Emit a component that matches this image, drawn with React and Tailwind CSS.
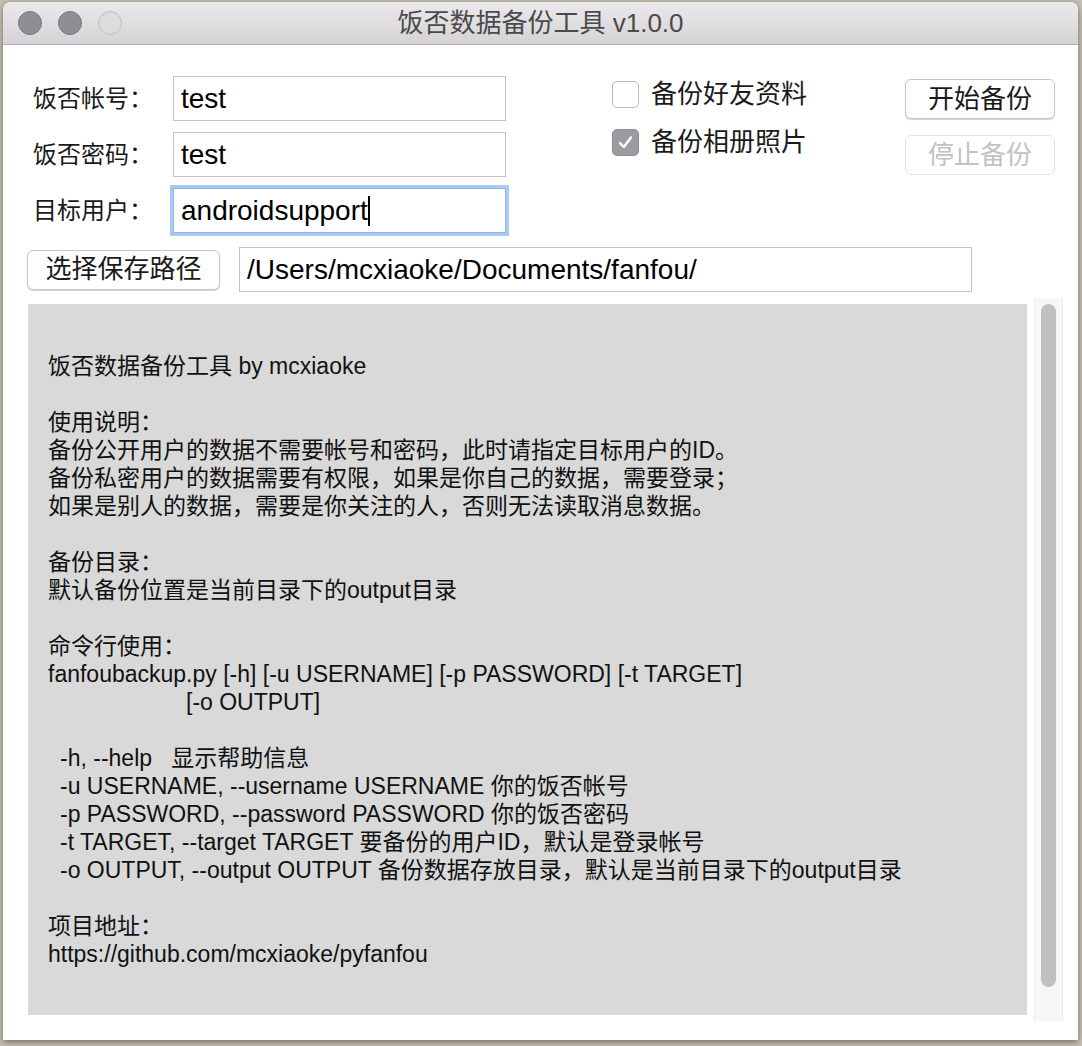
import React from 'react'

const font = { fontFamily: '"Liberation Sans", "Noto Sans CJK SC", sans-serif' }

const helpLines = [
  '饭否数据备份工具 by mcxiaoke',
  '',
  '使用说明：',
  '备份公开用户的数据不需要帐号和密码，此时请指定目标用户的ID。',
  '备份私密用户的数据需要有权限，如果是你自己的数据，需要登录；',
  '如果是别人的数据，需要是你关注的人，否则无法读取消息数据。',
  '',
  '备份目录：',
  '默认备份位置是当前目录下的output目录',
  '',
  '命令行使用：',
  'fanfoubackup.py [-h] [-u USERNAME] [-p PASSWORD] [-t TARGET]',
]

const optionLines = [
  '-h, --help   显示帮助信息',
  '-u USERNAME, --username USERNAME 你的饭否帐号',
  '-p PASSWORD, --password PASSWORD 你的饭否密码',
  '-t TARGET, --target TARGET 要备份的用户ID，默认是登录帐号',
  '-o OUTPUT, --output OUTPUT 备份数据存放目录，默认是当前目录下的output目录',
]

function Field({ label, value, focused }) {
  return (
    <div className="flex items-center h-[45px]">
      <div className="w-[140px] text-[24px] text-[#1a1a1a]">{label}</div>
      <div
        className={`w-[333px] h-[45px] flex items-center pl-[7px] bg-white text-[28px] text-black ${
          focused ? 'border border-[#8fb6e6] ring-[3px] ring-[#a9cbf3]' : 'border border-[#c4c4c4]'
        }`}
      >
        <span>{value}</span>
        {focused && <span className="w-[2px] h-[30px] bg-black" />}
      </div>
    </div>
  )
}

function Checkbox({ label, checked }) {
  return (
    <div className="flex items-center gap-[12px] h-[27px]">
      {checked ? (
        <div className="w-[27px] h-[27px] rounded-[5px] bg-[#9c9ba0] border border-[#8d8c91] flex items-center justify-center">
          <svg width="17" height="17" viewBox="0 0 17 17">
            <path d="M3 9.2 L6.8 13 L14 3.5" fill="none" stroke="white" strokeWidth="2.4" strokeLinecap="round" strokeLinejoin="round" />
          </svg>
        </div>
      ) : (
        <div className="w-[27px] h-[27px] rounded-[5px] bg-white border border-[#b9b9b9]" />
      )}
      <span className="text-[26px] text-[#1a1a1a]">{label}</span>
    </div>
  )
}

function MacButton({ children, disabled, className = '' }) {
  return (
    <div
      className={`h-[40px] rounded-[6px] bg-white flex items-center justify-center text-[26px] ${
        disabled
          ? 'border border-[#e2e2e2] text-[#c2c2c2]'
          : 'border border-[#c6c6c6] text-[#1a1a1a] shadow-[0_1px_1px_rgba(0,0,0,0.18)]'
      } ${className}`}
    >
      {children}
    </div>
  )
}

export default function App() {
  return (
    <div className="w-[1082px] h-[1046px] bg-[#c6c0b0] pt-[2px] pl-[3px] overflow-hidden" style={font}>
      <div className="w-[1075px] h-[1038px] bg-white rounded-t-[8px] flex flex-col shadow-[0_2px_6px_rgba(0,0,0,0.45)] overflow-hidden">
        {/* Title bar */}
        <div className="h-[43px] shrink-0 bg-gradient-to-b from-[#ebe9eb] to-[#d5d3d5] border-b border-[#b2b0b2] grid grid-cols-[200px_1fr_200px] items-center">
          <div className="flex items-center gap-[16px] pl-[15px]">
            <div className="w-[24px] h-[24px] rounded-full bg-[#8f8e93] border border-[#77767b]" />
            <div className="w-[24px] h-[24px] rounded-full bg-[#8f8e93] border border-[#77767b]" />
            <div className="w-[24px] h-[24px] rounded-full bg-[#dddcdd] border border-[#c0bfc0]" />
          </div>
          <div className="text-center text-[26px] text-[#4b4a4b]">饭否数据备份工具 v1.0.0</div>
          <div />
        </div>

        {/* Body */}
        <div className="flex-1 flex flex-col pl-[24px]">
          <div className="flex pt-[31px]">
            <div className="flex flex-col gap-[11px] pl-[6px]">
              <Field label="饭否帐号：" value="test" />
              <Field label="饭否密码：" value="test" />
              <Field label="目标用户：" value="androidsupport" focused />
            </div>
            <div className="flex flex-col gap-[21px] ml-[106px] pt-[5px]">
              <Checkbox label="备份好友资料" />
              <Checkbox label="备份相册照片" checked />
            </div>
            <div className="flex flex-col gap-[16px] ml-auto mr-[23px] pt-[3px]">
              <MacButton className="w-[150px]">开始备份</MacButton>
              <MacButton className="w-[150px]" disabled>停止备份</MacButton>
            </div>
          </div>

          <div className="flex items-center gap-[19px] mt-[14px]">
            <MacButton className="w-[193px]">选择保存路径</MacButton>
            <div className="w-[733px] h-[45px] border border-[#c4c4c4] bg-white flex items-center pl-[7px] text-[28px] text-black">
              /Users/mcxiaoke/Documents/fanfou/
            </div>
          </div>

          <div className="flex items-start gap-[7px] mt-[6px]">
            <div className="w-[999px] h-[711px] mt-[6px] ml-[1px] bg-[#d9d9d9] pl-[20px] pt-[48px] text-[23px] leading-[28px] text-[#111]">
              {helpLines.map((line, i) => (
                <div key={i} className="h-[28px] whitespace-pre">{line}</div>
              ))}
              <div className="h-[28px] whitespace-pre pl-[138px]">[-o OUTPUT]</div>
              <div className="h-[28px]" />
              {optionLines.map((line, i) => (
                <div key={i} className="h-[28px] whitespace-pre pl-[12px]">{line}</div>
              ))}
              <div className="h-[28px]" />
              <div className="h-[28px]">项目地址：</div>
              <div className="h-[28px]">https://github.com/mcxiaoke/pyfanfou</div>
            </div>
            <div className="w-[29px] h-[723px] bg-[#f7f7f7] border-x border-[#ececec] flex justify-center pt-[6px]">
              <div className="w-[15px] h-[683px] rounded-full bg-[#c1c1c1]" />
            </div>
          </div>
        </div>
      </div>
    </div>
  )
}
